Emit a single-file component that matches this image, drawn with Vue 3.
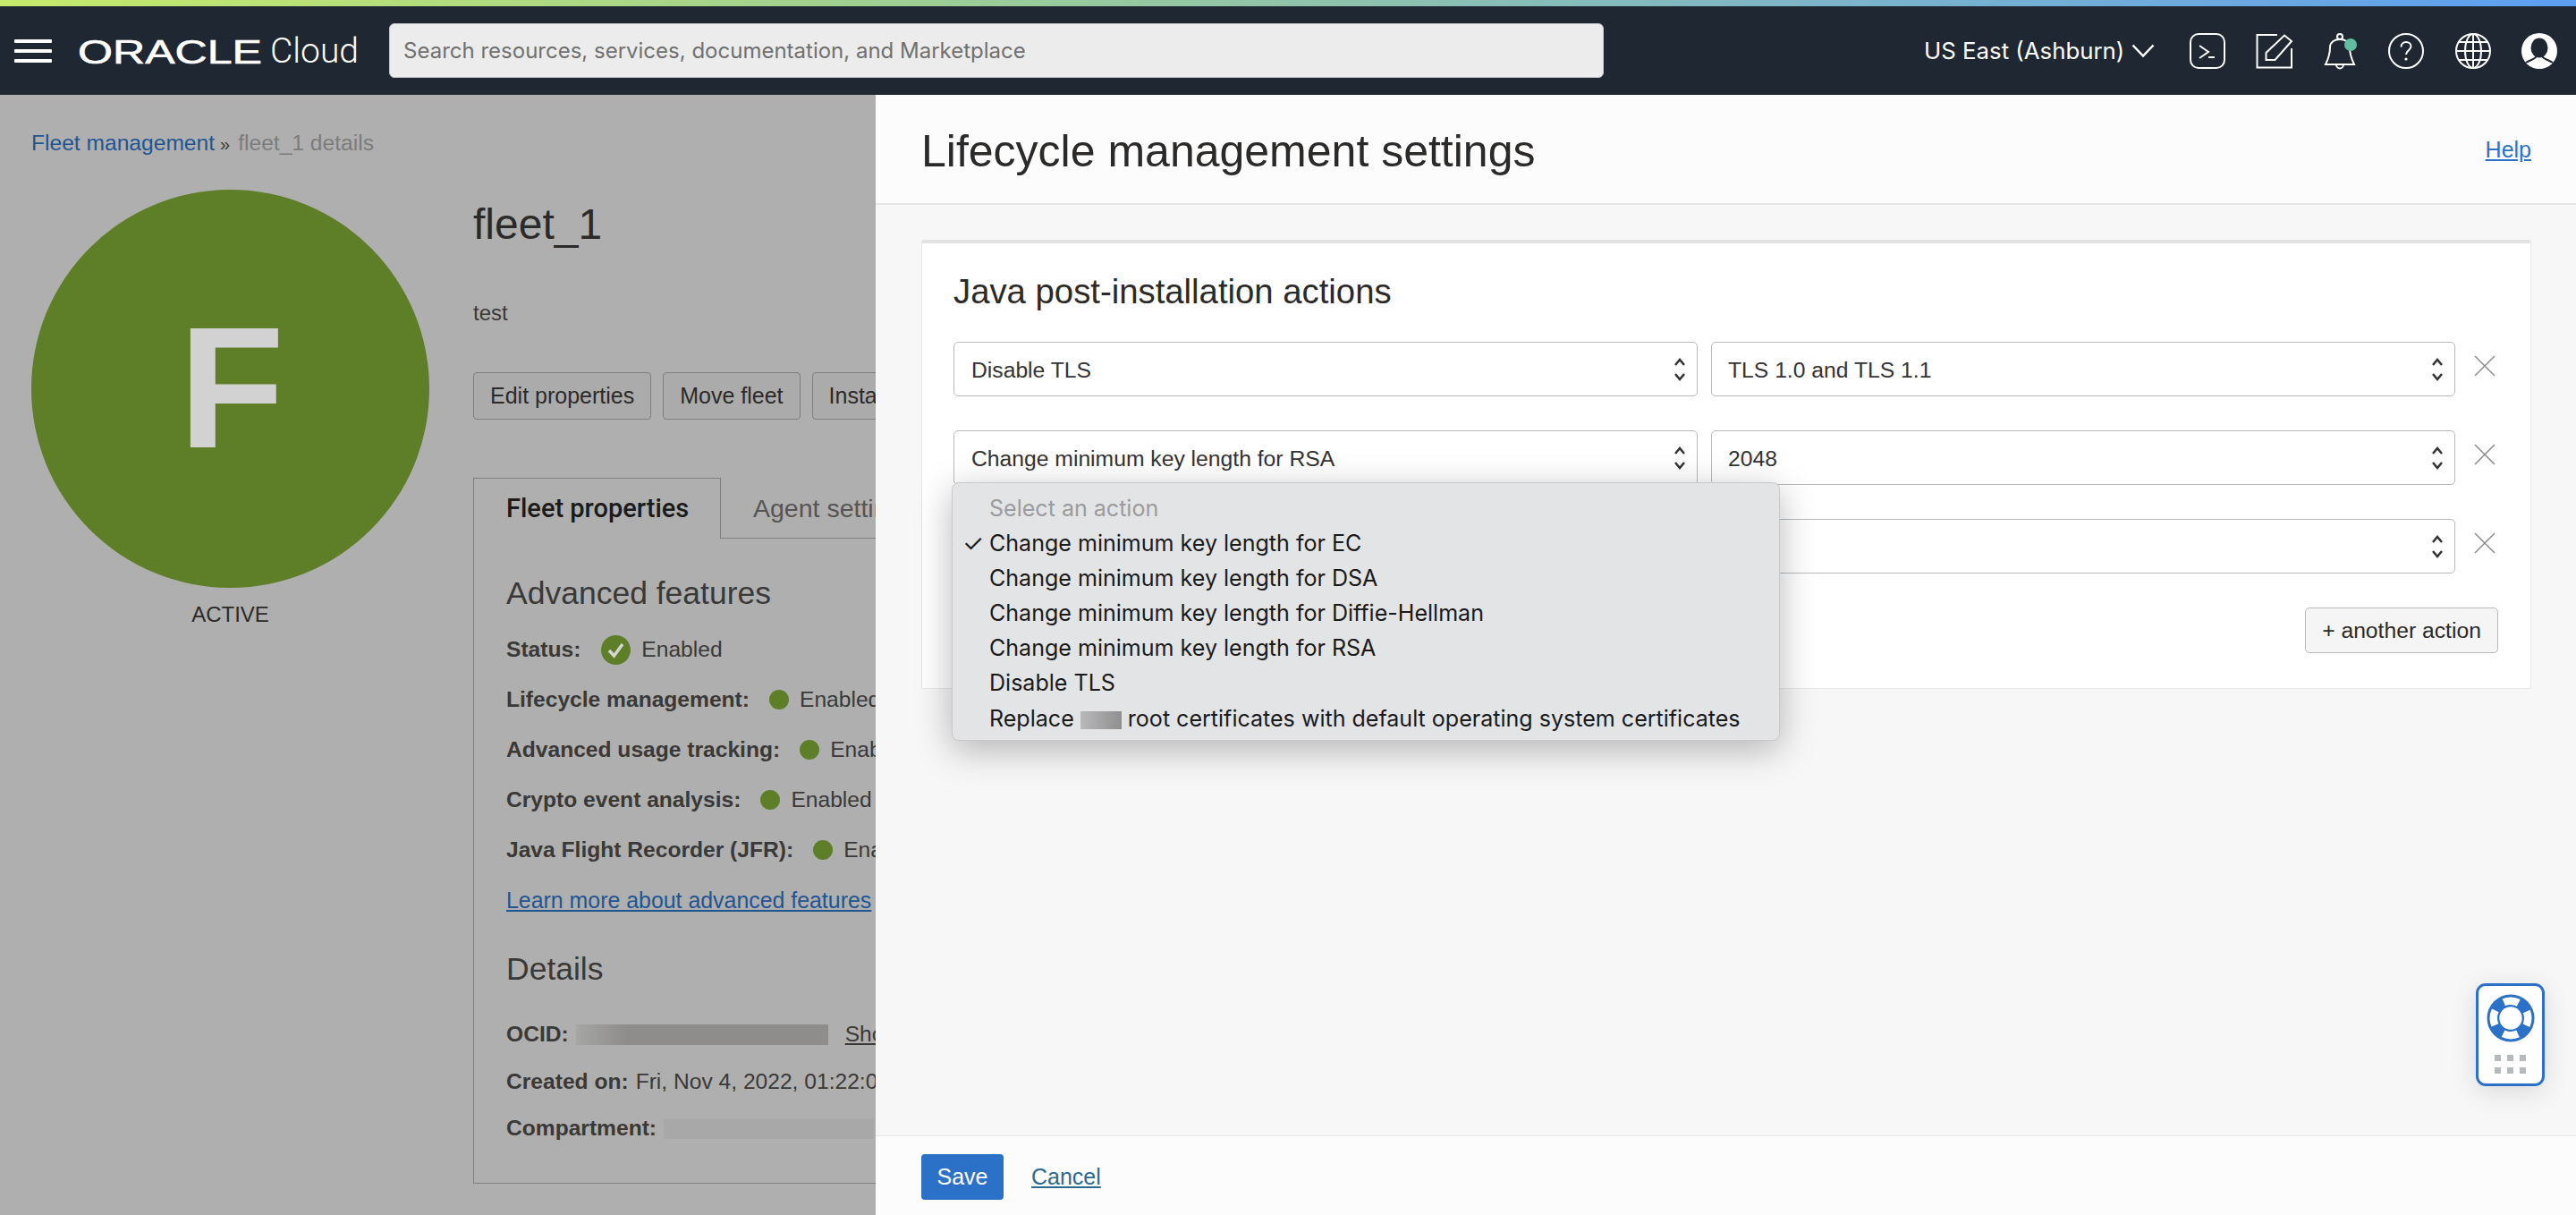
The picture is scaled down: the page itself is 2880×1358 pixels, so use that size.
<template>
  <div class="screen">
    <div class="rainbow"></div>
    <header class="topbar">
      <div class="burger"><i></i><i></i><i></i></div>
      <svg class="logo" width="202" height="34" viewBox="0 0 202 34">
        <text x="-2" y="30" textLength="206" lengthAdjust="spacingAndGlyphs" class="logo-text">ORACLE</text>
      </svg>
      <span class="cloud">Cloud</span>
      <div class="search">Search resources, services, documentation, and Marketplace</div>
      <span class="region">US East (Ashburn)</span>
      <svg class="chev" width="26" height="15" viewBox="0 0 26 15"><path d="M1.5 1.5 13 13.5 24.5 1.5" /></svg>
      <svg class="ico ico-term" width="40" height="40" viewBox="0 0 40 40">
        <rect x="1" y="1" width="38" height="38" rx="9" />
        <path d="M11 14l10 7-10 7M21 27h7" />
      </svg>
      <svg class="ico ico-note" width="42" height="40" viewBox="0 0 42 40">
        <path d="M24 2H1.5V38.5H40V17" />
        <path d="M11.5 30V22L32 2.5 40 9 21.5 30Z" />
      </svg>
      <svg class="ico ico-bell" width="38" height="42" viewBox="0 0 38 42">
        <circle cx="18" cy="4" r="3" />
        <path d="M2 35C6 27 7 22 7 16 7 10 12 7 18 7S29 10 29 16C29 22 30 27 34 35Z" />
        <path d="M14 35a4 4.5 0 0 0 8 0" />
        <circle class="dot" cx="30" cy="13" r="7" />
      </svg>
      <svg class="ico ico-help" width="40" height="40" viewBox="0 0 40 40">
        <circle cx="20" cy="20" r="19" />
        <path d="M14.5 15.5c0-3.500 2.500-5.500 5.500-5.500s5.500 2 5.500 5c0 4-5.500 4.500-5.500 9" />
        <circle class="fill" cx="20" cy="29" r="1.600" />
      </svg>
      <svg class="ico ico-globe" width="40" height="40" viewBox="0 0 40 40">
        <circle cx="20" cy="20" r="19" />
        <ellipse cx="20" cy="20" rx="9" ry="19" />
        <path d="M20 1V39M1 20H39M4 10H36M4 30H36" />
      </svg>
      <svg class="ico-user" width="40" height="40" viewBox="0 0 40 40">
        <circle cx="20" cy="20" r="20" fill="#fff" />
        <ellipse cx="20" cy="16.500" rx="9.500" ry="11" fill="#1f2733" />
        <path d="M5 33c5-3 10-4 12-7M35 33c-5-3-10-4-12-7" fill="none" stroke="#1f2733" stroke-width="2" />
      </svg>
    </header>

    <main class="page">
      <div class="crumbs">
        <a>Fleet management</a><span class="sep">»</span><span class="here">fleet_1 details</span>
      </div>
      <div class="fleet">
        <div class="avatar-col">
          <div class="avatar">F</div>
          <div class="state">ACTIVE</div>
        </div>
        <div class="fleet-main">
          <h1>fleet_1</h1>
          <p class="desc">test</p>
          <div class="actions">
            <button>Edit properties</button>
            <button>Move fleet</button>
            <button>Install</button>
          </div>
          <div class="tabs">
            <div class="tab on">Fleet properties</div>
            <div class="tab">Agent settings</div>
          </div>
          <div class="tab-body">
            <h2>Advanced features</h2>
            <div class="feat">
              <b>Status:</b>
              <svg class="ok" width="33" height="33" viewBox="0 0 33 33">
                <circle cx="16.500" cy="16.500" r="16.500" fill="#5e7f27" />
                <path d="M9 17l5.500 6L24 10" fill="none" stroke="#d6d6d6" stroke-width="3.500" />
              </svg>
              <span>Enabled</span>
            </div>
            <div v-for="f in features" :key="f" class="feat">
              <b>{{ f }}</b><i class="green"></i><span>Enabled</span>
            </div>
            <a class="learn">Learn more about advanced features</a>
            <h2 class="details-h">Details</h2>
            <div class="info">
              <b>OCID:</b><i class="blur blur-a"></i><u>Show</u>
            </div>
            <div class="info"><b>Created on:</b> <span>Fri, Nov 4, 2022, 01:22:06 UTC</span></div>
            <div class="info"><b>Compartment:</b><i class="blur blur-b"></i></div>
          </div>
        </div>
      </div>
    </main>

    <!-- drawer over the dimmed page -->
    <aside class="drawer">
      <div class="drawer-head">
        <h2>Lifecycle management settings</h2>
        <a class="help">Help</a>
      </div>
      <div class="drawer-body">
        <section class="card">
          <h3>Java post-installation actions</h3>
          <div v-for="(r, i) in rows" :key="i" class="row">
            <div class="sel" :class="{ focus: i === 2 }">
              <span>{{ r[0] }}</span>
              <svg class="updown" width="14" height="26" viewBox="0 0 14 26"><path d="M2 8 7 2l5 6M2 18l5 6 5-6" /></svg>
            </div>
            <div class="sel second">
              <span>{{ r[1] }}</span>
              <svg class="updown" width="14" height="26" viewBox="0 0 14 26"><path d="M2 8 7 2l5 6M2 18l5 6 5-6" /></svg>
            </div>
            <svg class="remove" width="24" height="24" viewBox="0 0 24 24"><path d="M1 1 23 23M23 1 1 23" /></svg>
          </div>
          <div class="more"><button>+ another action</button></div>
        </section>
      </div>
      <div class="drawer-foot">
        <button class="save">Save</button>
        <a class="cancel">Cancel</a>
      </div>
    </aside>

    <ul class="menu">
      <li class="muted">Select an action</li>
      <li v-for="o in options" :key="o" :class="{ checked: o.endsWith('EC') }">{{ o }}</li>
      <li>Replace <i class="blur-c"></i> root certificates with default operating system certificates</li>
    </ul>

    <div class="assist">
      <svg width="54" height="54" viewBox="0 0 54 54">
        <circle cx="27" cy="27" r="26.500" fill="#2b71c7" />
        <circle cx="27" cy="27" r="19.250" fill="none" stroke="#fff" stroke-width="8.500" stroke-dasharray="17 13.250" stroke-dashoffset="8.500" />
        <circle cx="27" cy="27" r="12.700" fill="#fff" />
      </svg>
      <div class="dots"><i v-for="n in 6" :key="n"></i></div>
    </div>
  </div>
</template>

<script setup>
const features = [
  'Lifecycle management:',
  'Advanced usage tracking:',
  'Crypto event analysis:',
  'Java Flight Recorder (JFR):',
]

// third row's action sits under the open menu
const rows = [
  ['Disable TLS', 'TLS 1.0 and TLS 1.1'],
  ['Change minimum key length for RSA', '2048'],
  ['', ''],
]

const options = [
  'Change minimum key length for EC',
  'Change minimum key length for DSA',
  'Change minimum key length for Diffie-Hellman',
  'Change minimum key length for RSA',
  'Disable TLS',
]
</script>

<style>
html, body { margin: 0; background: #afafaf; }
</style>

<style scoped>
.screen {
  position: relative;
  width: 2880px;
  height: 1358px;
  overflow: hidden;
  background: #afafaf;
  font-family: "Liberation Sans", Arial, sans-serif;
  color: #3a3937;
}
.rainbow {
  height: 7px;
  background: linear-gradient(90deg, #c6ea6a, #a0d090 33%, #7ab3cc 73%, #5d9ef2);
}

/* top bar */
.topbar {
  display: flex;
  align-items: center;
  height: 99px;
  background: #1f2733;
  color: #fff;
  font-family: Inter, sans-serif;
}
.burger { margin-left: 16px; width: 42px; }
.burger i { display: block; height: 4px; background: #fff; border-radius: 1px; margin-bottom: 7px; }
.burger i:last-child { margin-bottom: 0; }
.logo { margin-left: 31px; margin-top: 2px; overflow: visible; flex: none; }
.logo-text { font-family: "Liberation Sans", sans-serif; font-size: 36px; fill: #fff; stroke: #fff; stroke-width: 0.6px; }
.cloud { margin-left: 11px; font-family: Roboto, sans-serif; font-weight: 300; font-size: 39px; }
.search {
  margin-left: 34px;
  width: 1358px;
  height: 61px;
  box-sizing: border-box;
  padding-left: 15px;
  line-height: 60px;
  background: #ececec;
  border: 1px solid #c4c6ca;
  border-radius: 6px;
  color: #70706f;
  font-size: 24px;
  white-space: nowrap;
}
.region { margin-left: 358px; font-size: 25.800px; white-space: nowrap; }
.chev { margin-left: 8px; fill: none; stroke: #fff; stroke-width: 2.500; }
.ico { fill: none; stroke: #fff; stroke-width: 2; flex: none; }
.ico .dot { fill: #5fbf9f; stroke: none; }
.ico .fill { fill: #fff; stroke: none; }
.ico-term { margin-left: 39px; }
.ico-note { margin-left: 34px; }
.ico-bell { margin-left: 34px; margin-top: 2px; }
.ico-help { margin-left: 34px; }
.ico-globe { margin-left: 35px; }
.ico-user { margin-left: 34px; flex: none; }

/* dimmed page */
.page { padding: 40px 0 0 35px; white-space: nowrap; }
.crumbs { font-size: 24.600px; line-height: 28px; color: #7c7c7c; }
.crumbs a { color: #1f5592; }
.sep { margin: 0 9px 0 6px; color: #3a3937; font-size: 20px; }
.fleet { display: flex; margin-top: 37px; }
.avatar-col { width: 445px; flex: none; }
.avatar {
  width: 445px;
  height: 445px;
  border-radius: 50%;
  background: #5e7f27;
  color: #d2d2d2;
  font-size: 193px;
  font-weight: 700;
  line-height: 443px;
  text-indent: 3px;
  text-align: center;
}
.state { margin-top: 16px; font-size: 24px; line-height: 28px; text-align: center; color: #2b2a29; }
.fleet-main { margin-left: 49px; width: 1400px; flex: none; }
h1 { margin: 12px 0 0; font-size: 48px; font-weight: 400; line-height: 54px; color: #2b2a29; }
.desc { margin: 58px 0 0; font-size: 24px; line-height: 28px; }
.actions { display: flex; gap: 13px; margin-top: 52px; }
.actions button {
  height: 53px;
  padding: 0 18px;
  background: #ababab;
  border: 1px solid #7f7f7f;
  border-radius: 4px;
  font: 25px "Liberation Sans", sans-serif;
  color: #2b2a29;
}
.tabs { display: flex; height: 68px; box-sizing: border-box; border-bottom: 1px solid #7f7f7f; margin-top: 65px; }
.tab { padding: 0 36px; line-height: 68px; font-size: 28.500px; color: #555; }
.tab.on {
  width: 277px;
  box-sizing: border-box;
  height: 68px;
  background: #afafaf;
  border: 1px solid #7f7f7f;
  border-bottom: none;
  color: #1c1b1a;
  font-size: 29px;
  font-weight: 500;
  line-height: 66px;
  font-family: Roboto, sans-serif;
}
.tab-body {
  height: 721px;
  box-sizing: border-box;
  padding: 39px 0 0 36px;
  border: 1px solid #7f7f7f;
  border-top: none;
}
.tab-body h2 { margin: 0 0 13px; font-size: 35.500px; font-weight: 400; line-height: 44px; }
.feat { display: flex; align-items: center; height: 56px; font-size: 24.600px; }
.feat span { margin-left: 12px; }
.ok { margin-left: 23px; }
.green { margin-left: 22px; width: 22px; height: 22px; border-radius: 50%; background: #5e7f27; }
.learn { display: block; font-size: 24.900px; line-height: 56px; color: #1f5592; text-decoration: underline; }
.tab-body .details-h { margin: 27px 0 25px; }
.info { display: flex; align-items: center; gap: 8px; height: 52.500px; font-size: 24.600px; }
.blur { display: block; height: 23px; }
.blur-a { width: 282px; background: linear-gradient(90deg, #a6a6a4, #8e8d8b 20%, #8e8d8b); }
.blur-b { width: 235px; background: #a8a8a8; }
.info u { margin-left: 11px; }

/* drawer */
.drawer {
  position: absolute;
  left: 979px;
  right: 0;
  top: 106px;
  bottom: 0;
  display: flex;
  flex-direction: column;
  background: #f7f7f7;
}
.drawer-head {
  display: flex;
  justify-content: space-between;
  align-items: center;
  height: 123px;
  box-sizing: border-box;
  padding: 0 50px 0 51px;
  background: #fcfcfc;
  border-bottom: 2px solid #e6e6e6;
}
.drawer-head h2 { margin: 5px 0 0; font-size: 50px; font-weight: 400; color: #2b2a29; }
.help { margin-top: 2px; font-size: 25px; color: #2c71c6; text-decoration: underline; }
.drawer-body { flex: 1; padding: 39px 50px 0 51px; }
.card {
  height: 502px;
  box-sizing: border-box;
  padding: 0 36px 0 35px;
  background: #fff;
  border: 1px solid #e8e8e8;
  border-top: 4px solid #e2e2e2;
  border-radius: 3px;
}
.card h3 { margin: 0; padding-top: 32px; height: 110px; box-sizing: border-box; font-size: 38.300px; font-weight: 400; line-height: 44px; color: #2b2a29; }
.row { display: flex; gap: 15px; height: 61px; margin-bottom: 38px; }
.sel {
  display: flex;
  align-items: center;
  justify-content: space-between;
  width: 832px;
  box-sizing: border-box;
  padding: 0 12px 0 19px;
  border: 1px solid #b8bac0;
  border-radius: 5px;
  font-size: 24.700px;
  color: #333;
}
.sel span { margin-top: 2px; }
.sel.second { padding-left: 18px; }
.sel.focus { border-color: #aab4c8; box-shadow: -2px 0 0 #3f6fb8; }
.updown { fill: none; stroke: #333; stroke-width: 2.500; }
.remove { flex: none; margin: 15px 0 0 6px; fill: none; stroke: #8b8b8b; stroke-width: 1.500; }
.more { display: flex; justify-content: flex-end; margin-top: 5px; }
.more button {
  width: 216px;
  height: 51px;
  background: #f5f5f5;
  border: 1px solid #b8bac0;
  border-radius: 5px;
  font: 24.700px "Liberation Sans", sans-serif;
  color: #2b2a29;
}
.drawer-foot {
  display: flex;
  align-items: flex-start;
  height: 89px;
  box-sizing: border-box;
  padding: 20px 0 0 51px;
  background: #fcfcfc;
  border-top: 1px solid #e5e5e5;
}
.save {
  width: 92px;
  height: 51px;
  background: #2b71c7;
  border: none;
  border-radius: 4px;
  color: #fff;
  font: 25px "Liberation Sans", sans-serif;
}
.cancel { margin: 11px 0 0 31px; font-size: 25px; color: #2a6a8f; text-decoration: underline; }

/* native select menu */
.menu {
  position: absolute;
  left: 1064px;
  top: 539px;
  width: 926px;
  height: 289px;
  box-sizing: border-box;
  margin: 0;
  padding: 9px 0 0 41px;
  list-style: none;
  background: #e3e4e6;
  border: 1px solid #c9c9cb;
  border-radius: 8px;
  box-shadow: 0 10px 40px rgba(0, 0, 0, 0.28);
  font-family: Inter, sans-serif;
  font-size: 25.050px;
  line-height: 39.100px;
  color: #1a1a1a;
  white-space: nowrap;
}
.menu .muted { color: #9b9b9d; }
.menu .checked { position: relative; }
.menu .checked::before { content: "✓"; position: absolute; left: -30px; font-size: 27px; }
.blur-c {
  display: inline-block;
  width: 46px;
  height: 20px;
  vertical-align: -3px;
  background: linear-gradient(90deg, #b9b9bb, #8f8f90);
}

/* floating help */
.assist {
  position: absolute;
  left: 2768px;
  top: 1099px;
  width: 77px;
  height: 115px;
  box-sizing: border-box;
  padding-top: 9px;
  background: #fff;
  border: 3px solid #2b71c7;
  border-radius: 11px;
  box-shadow: 0 6px 30px rgba(0, 0, 0, 0.12);
  text-align: center;
}
.assist svg { display: block; margin: 0 auto; }
.dots { display: grid; grid-template-columns: repeat(3, 7px); gap: 7px; justify-content: center; margin-top: 14px; }
.dots i { width: 7px; height: 7px; background: #b6b9bf; }
</style>
